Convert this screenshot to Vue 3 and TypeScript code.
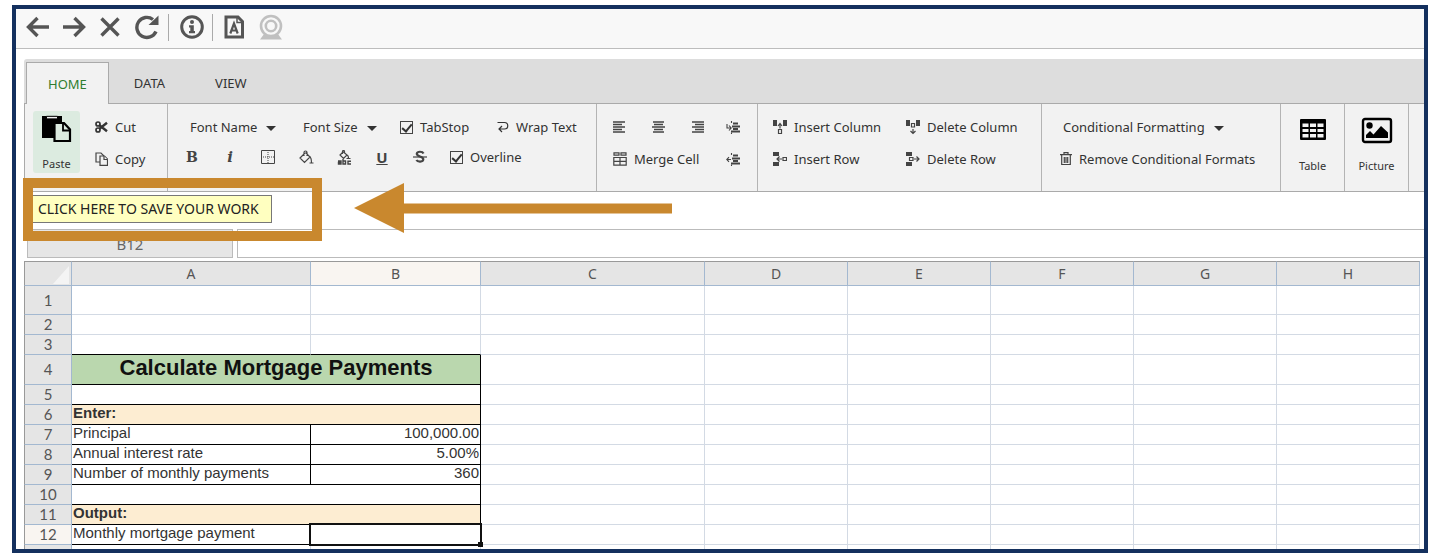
<script setup lang="ts">
import { ref } from 'vue'

interface Row {
  n: number
  tall?: 'first' | 'title'
  kind?: 'title' | 'band' | 'blank' | 'entry' | 'output'
  label?: string
  value?: string
}

const columns = ['A', 'B', 'C', 'D', 'E', 'F', 'G', 'H']
const tabs = ['HOME', 'DATA', 'VIEW']
const activeTab = ref('HOME')
const tabStop = ref(true)
const overline = ref(true)
const cellName = ref('B12')
const formula = ref('')

const rows: Row[] = [
  { n: 1, tall: 'first' },
  { n: 2 },
  { n: 3 },
  { n: 4, tall: 'title', kind: 'title', label: 'Calculate Mortgage Payments' },
  { n: 5, kind: 'blank' },
  { n: 6, kind: 'band', label: 'Enter:' },
  { n: 7, kind: 'entry', label: 'Principal', value: '100,000.00' },
  { n: 8, kind: 'entry', label: 'Annual interest rate', value: '5.00%' },
  { n: 9, kind: 'entry', label: 'Number of monthly payments', value: '360' },
  { n: 10, kind: 'blank' },
  { n: 11, kind: 'band', label: 'Output:' },
  { n: 12, kind: 'output', label: 'Monthly mortgage payment' },
]

const isMerged = (r: Row) => r.kind === 'title' || r.kind === 'band' || r.kind === 'blank'
</script>

<template>
  <div class="frame">
    <nav class="browser" aria-label="Browser">
      <button aria-label="Back"><svg width="24" height="24" viewBox="0 0 24 24" class="thick"><path d="M23 12H3M11.500 3L2.500 12l9 9" /></svg></button>
      <button aria-label="Forward"><svg width="24" height="24" viewBox="0 0 24 24" class="thick"><path d="M1 12h20M12.500 3l9 9-9 9" /></svg></button>
      <button aria-label="Stop"><svg width="24" height="24" viewBox="0 0 24 24" class="thick"><path d="M3.500 3.500l17 17M20.500 3.500l-17 17" /></svg></button>
      <button aria-label="Reload"><svg width="26" height="26" viewBox="0 0 26 26" class="thick"><path d="M22 17.500A10 10 0 1 1 19 5.500" /><path d="M24.500 1.500v9.500h-10z" fill="#555" stroke="none" /></svg></button>
      <span class="sep"></span>
      <button aria-label="Information"><svg width="24" height="24" viewBox="0 0 24 24"><circle cx="12" cy="12" r="10.300" fill="none" stroke="#555" stroke-width="3" /><circle cx="12" cy="7" r="2" fill="#555" /><path d="M9 10.200h4.800V16H15v2.200H9V16h1.300v-3.600H9z" fill="#555" /></svg></button>
      <span class="sep"></span>
      <button aria-label="Text document"><svg width="20" height="24" viewBox="0 0 20 24"><path d="M2 2h12l4.500 4.500V22H2z" fill="#f8f8f8" stroke="#555" stroke-width="3" /><path d="M13 1v6.500h6" fill="none" stroke="#555" stroke-width="1.500" /><path d="M6.300 18.500L10 8.500l3.700 10M7.500 15.500h5" fill="none" stroke="#555" stroke-width="2.200" /></svg></button>
      <button class="camera" aria-label="Camera"><svg width="24" height="26" viewBox="0 0 24 26" fill="none" stroke="#c0c0c0"><path d="M6 20l-3.500 4.700h19L18 20z" stroke-width="1.500" fill="#c0c0c0" /><circle cx="12" cy="12" r="10" stroke-width="2.600" fill="#f8f8f8" /><circle cx="12" cy="12" r="5.200" stroke-width="2.600" /></svg></button>
    </nav>

    <main class="app">
      <div class="tabs" role="tablist">
        <button v-for="t in tabs" :key="t" role="tab" :aria-selected="t === activeTab" :class="{ active: t === activeTab }" @click="activeTab = t">{{ t }}</button>
      </div>

      <div class="ribbon">
        <section class="group clipboard">
          <button class="big paste">
            <svg width="30" height="28" viewBox="0 0 30 28"><path d="M0 1h20v8h-8v14H0z" /><path d="M4.500 1.300h11v2.600h-11z" fill="#f2f2f2" stroke="#000" /><path d="M12.500 8h9.500l6 6.500V26H12.500z" fill="#dcebe0" stroke="#000" stroke-width="2.200" /><path d="M21 8v7.500h7" fill="none" stroke="#000" stroke-width="1.800" /></svg>
            <span>Paste</span>
          </button>
          <div class="stack">
            <button class="tool"><svg width="13" height="14" viewBox="0 0 13 14" fill="none" stroke="#333" stroke-width="1.700"><circle cx="3" cy="4" r="2" /><circle cx="3" cy="10" r="2" /><path d="M4.500 5.300L12 11.300M4.500 8.700L12 2.700" stroke-width="2.400" /></svg>Cut</button>
            <button class="tool"><svg width="13" height="14" viewBox="0 0 13 14" fill="#f2f2f2" stroke="#444" stroke-width="1.200"><path d="M1 1h5l2.500 2.500V10H1z" /><path d="M5 4h4.500l3 3v6.300H5z" /><path d="M9 4v3.500h3.500" /></svg>Copy</button>
          </div>
        </section>

        <section class="group font">
          <div class="line selects">
            <button>Font Name<i class="caret"></i></button>
            <button>Font Size<i class="caret"></i></button>
            <label><input v-model="tabStop" type="checkbox" />TabStop</label>
            <button class="tool"><svg width="12" height="12" viewBox="0 0 12 12" fill="none" stroke="#333" stroke-width="1.200"><path d="M.500 1.500H7.500a3 3 0 0 1 0 6.500H2M5 5L2 8l3 3" /></svg>Wrap Text</button>
          </div>
          <div class="line styles">
            <button class="icon glyph" aria-label="Bold"><b>B</b></button>
            <button class="icon glyph" aria-label="Italic"><em>i</em></button>
            <button class="icon" aria-label="Borders"><svg width="14" height="14" viewBox="0 0 14 14" fill="none" stroke="#444"><path d="M.5.5h13v13H.5z" /><path d="M7 2v11M2 7h11" stroke-dasharray="1 1" /></svg></button>
            <button class="icon" aria-label="Fill colour"><svg width="15" height="14" viewBox="0 0 15 14" fill="none" stroke="#444" stroke-width="1.200"><path d="M6 3L1 8l4.500 4.500 5.500-5.500-4.500-4.500M5 6V2.500a1.500 1.500 0 0 1 3 0V6" /><path d="M10.500 6.500c2 1 2 3 2 6.500M10.500 13h4" /></svg></button>
            <button class="icon" aria-label="Font colour"><svg width="15" height="15" viewBox="0 0 15 15" fill="none" stroke="#444"><path d="M6.500 1.500L3 5l3.500 3.500L10 5 6.500 2M5.500 4V1.500a1 1 0 0 1 2 0V4M10 5c1.500.5 1.500 2 1.500 3.500M9.500 8.500h4" stroke-width="1.200" /><path d="M1 11h3v3H1.500v-1.500H4M6 9v5h2.500v-3H6M14 11.200h-3V14h3" stroke-width="1.400" /></svg></button>
            <button class="icon glyph" aria-label="Underline"><u>U</u></button>
            <button class="icon" aria-label="Strikethrough"><svg width="14" height="14" viewBox="0 0 14 14" fill="none" stroke="#444"><path d="M10.500 3.500C9.500 1.200 4.300 1 3.800 3.700c-.2 3 6.700 2.500 6.500 5.600-.2 3-5.600 2.900-6.900.7" stroke-width="2.200" /><path d="M0 7h14" stroke-width="1.200" /></svg></button>
            <label><input v-model="overline" type="checkbox" />Overline</label>
          </div>
        </section>

        <section class="group align">
          <div class="line">
            <button class="icon" aria-label="Align left"><svg width="13" height="12" viewBox="0 0 13 12" class="bars"><path d="M0 1h12M0 3.500h9M0 6h12M0 8.500h9M0 11h12" /></svg></button>
            <button class="icon" aria-label="Align centre"><svg width="13" height="12" viewBox="0 0 13 12" class="bars"><path d="M1 1h11M2 3.500h9M0 6h13M2 8.500h9M1 11h11" /></svg></button>
            <button class="icon" aria-label="Align right"><svg width="13" height="12" viewBox="0 0 13 12" class="bars"><path d="M1 1h12M4 3.500h9M1 6h12M4 8.500h9M1 11h12" /></svg></button>
            <button class="icon" aria-label="Increase indent"><svg width="15" height="13" viewBox="0 0 15 13" class="bars"><path d="M7 2.500h5M6 5.500h8M7 8h5M5 10.500h9" stroke-width="1.800" /><path d="M5.500 0v2M5.500 11.500V13M1 3v4h4M3 4.500L5.200 7 3 9.500" stroke-width="1.100" /></svg></button>
          </div>
          <div class="line">
            <button class="tool merge"><svg width="14" height="14" viewBox="0 0 14 14" fill="none" stroke="#444" stroke-width="1.200"><path d="M1 .8h5v2.400H1zM8 .8h5v2.400H8zM.8 5.500h12.400v7.700H.8zM.8 9.300h12.400M7 5.500v7.700" /></svg>Merge Cell</button>
            <button class="icon" aria-label="Decrease indent"><svg width="15" height="13" viewBox="0 0 15 13" class="bars"><path d="M7 2.500h5M6 5.500h8M7 8h5M5 10.500h9" stroke-width="1.800" /><path d="M5.500 0v2M5.500 11.500V13M5 6.500H.800M3 4.200L.800 6.500 3 8.800" stroke-width="1.100" /></svg></button>
          </div>
        </section>

        <section class="group cells">
          <button class="tool"><svg width="14" height="16" viewBox="0 0 14 16" fill="#444"><path d="M0 1h4v6H0zM10 1h4v6h-4z" /><path d="M5.500 10.500h3v4h-3zM7 9.500V5M5 7l2-2.500L9 7" fill="none" stroke="#444" stroke-width="1.200" /></svg>Insert Column</button>
          <button class="tool"><svg width="14" height="16" viewBox="0 0 14 16" fill="#444"><path d="M0 1h4v6H0zM10 1h4v6h-4z" /><path d="M5.500 4.500h3V8h-3zM7 10v4.500M4.500 12L7 14.500 9.500 12" fill="none" stroke="#444" stroke-width="1.200" /></svg>Delete Column</button>
          <button class="tool"><svg width="14" height="14" viewBox="0 0 14 14" fill="#444"><path d="M0 0h6v4H0zM0 10h6v4H0z" /><path d="M10 5.500h3.500v3H10zM9 7H4M6.500 4.500L4 7l2.500 2.500" fill="none" stroke="#444" stroke-width="1.200" /></svg>Insert Row</button>
          <button class="tool"><svg width="14" height="14" viewBox="0 0 14 14" fill="#444"><path d="M0 0h6v4H0zM0 10h6v4H0z" /><path d="M3.500 5.500H7v3H3.500zM8 7h5M10.500 4.500L13 7l-2.500 2.500" fill="none" stroke="#444" stroke-width="1.200" /></svg>Delete Row</button>
        </section>

        <section class="group conditional">
          <button class="text">Conditional Formatting<i class="caret"></i></button>
          <button class="tool"><svg width="12" height="14" viewBox="0 0 12 14" fill="none" stroke="#444" stroke-width="1.200"><path d="M0 2.700h12M4 2.500V.7h4v1.800M1.700 3v9.500h8.600V3M4.300 5v6M6 5v6M7.700 5v6" /></svg>Remove Conditional Formats</button>
        </section>

        <section class="group single">
          <button class="big"><svg width="28" height="28" viewBox="0 0 28 28"><path d="M2 3h24v19H2z" fill="#000" stroke="#000" stroke-width="2" stroke-linejoin="round" /><path d="M3.500 6.500h6V10h-6zM11 6.500h6V10h-6zM18.500 6.500h6V10h-6zM3.500 12h6v3h-6zM11 12h6v3h-6zM18.500 12h6v3h-6zM3.500 17h6v3.500h-6zM11 17h6v3.500h-6zM18.500 17h6v3.500h-6z" fill="#f2f2f2" /></svg><span>Table</span></button>
        </section>
        <section class="group single">
          <button class="big"><svg width="32" height="28" viewBox="0 0 32 28"><rect x="2" y="2" width="28" height="23" rx="2" fill="none" stroke="#000" stroke-width="2.400" /><circle cx="8.500" cy="8.500" r="3.200" /><path d="M5 21v-3l4-4 3.500 3.500L20 9l7 6.500V21z" /></svg><span>Picture</span></button>
        </section>
      </div>

      <div class="saveRow">
        <button class="save">CLICK HERE TO SAVE YOUR WORK</button>
        <div class="highlight"></div>
        <svg class="arrow" width="318" height="50" viewBox="0 0 318 50"><path d="M0 25L50 0v20.500h268v10H50V50z" fill="#c9882e" /></svg>
      </div>

      <div class="formulaBar">
        <input v-model="cellName" class="nameBox" aria-label="Cell name" />
        <input v-model="formula" class="formula" aria-label="Formula" />
      </div>

      <table class="sheet">
        <colgroup>
          <col class="cHead" /><col class="cA" /><col class="cB" /><col class="cC" />
          <col v-for="c in columns.slice(3)" :key="c" class="cRest" />
        </colgroup>
        <thead>
          <tr>
            <th class="corner"><svg width="16" height="18" viewBox="0 0 16 18"><path d="M16 0v18H0z" fill="#f4f4f4" /></svg></th>
            <th v-for="c in columns" :key="c" scope="col" :class="{ current: c === 'B' }">{{ c }}</th>
          </tr>
        </thead>
        <tbody>
          <tr v-for="r in rows" :key="r.n" :class="[r.kind, r.tall, { above: r.n === 3 }]">
            <th scope="row" :class="{ current: r.n === 12 }">{{ r.n }}</th>
            <td v-if="isMerged(r)" colspan="2" class="merged">{{ r.label }}</td>
            <template v-else>
              <td class="a">{{ r.label }}</td>
              <td class="b">{{ r.value }}<span v-if="r.kind === 'output'" class="selection"></span></td>
            </template>
            <td v-for="c in columns.slice(2)" :key="c"></td>
          </tr>
          <tr>
            <th></th>
            <td v-for="c in columns" :key="c"></td>
          </tr>
        </tbody>
      </table>
    </main>
  </div>
</template>

<style>
body { margin: 0; background: #fff; overflow: hidden; }
</style>

<style scoped>
* { box-sizing: border-box; }
.frame {
  position: relative;
  height: calc(100vh - 8px);
  margin: 5px 10px 3px 12px;
  border: 4px solid #14305e;
  background: #fff;
  overflow: hidden;
  font: 13px/18px "Noto Sans", "Open Sans", sans-serif;
  color: #333;
}
button {
  font: inherit;
  color: inherit;
  background: none;
  border: 0;
  padding: 0;
  margin: 0;
  white-space: nowrap;
}
svg { display: block; flex: none; }
.browser {
  display: flex;
  align-items: center;
  gap: 12px;
  height: 40px;
  padding: 0 10px 3px;
  background: #f8f8f8;
  border-bottom: 1px solid #bdbdbd;
}
.browser .sep { width: 1px; height: 27px; background: #aaa; margin: 0 -4px; }
.browser .sep + button { margin-left: 3px; }
.browser .camera { margin-left: 3px; }
.thick { fill: none; stroke: #555; stroke-width: 3.4; }
.app { margin: 10px 0 0 8px; }

.tabs {
  display: flex;
  height: 44px;
  padding: 3px 0 0 2px;
  background: #ddd;
  border-radius: 3px 0 0 0;
}
.tabs button { height: 42px; padding: 0 25px; position: relative; }
.tabs .active {
  padding: 0 21px;
  color: #2f7d2f;
  background: #f2f2f2;
  border: 1px solid #aaa;
  border-bottom: 0;
}

.ribbon {
  display: flex;
  height: 89px;
  background: #f2f2f2;
  border: 1px solid #aaa;
  border-right: 0;
}
.group { flex: none; border-right: 1px solid #b4b4b4; padding-top: 7px; }
.line { display: flex; align-items: center; height: 32px; }
.tool { display: flex; align-items: center; gap: 7px; height: 32px; }
.icon { display: flex; align-items: center; justify-content: center; }
label { display: flex; align-items: center; gap: 7px; }
.caret {
  display: inline-block;
  margin-left: 9px;
  vertical-align: middle;
  border: 5px solid transparent;
  border-top-color: #333;
  border-bottom: 0;
}
.clipboard { display: flex; width: 143px; gap: 15px; padding-left: 8px; }
.big {
  display: flex;
  flex-direction: column;
  align-items: center;
  justify-content: space-between;
  width: 100%;
  height: 62px;
  padding-top: 4px;
  font-size: 11px;
}
.paste { width: 47px; background: #dcebe0; border-radius: 3px; }
.font { width: 429px; padding-top: 8px; }
.selects { height: 30px; padding-left: 22px; }
.selects > :nth-child(1) { width: 113px; text-align: left; }
.selects > :nth-child(2) { width: 97px; text-align: left; }
.selects > :nth-child(3) { width: 97px; }
.styles { height: 30px; padding-left: 5px; }
.styles .icon { width: 38px; }
.styles label { padding-left: 11px; }
.glyph { font: bold 15px/18px "DejaVu Serif", serif; color: #444; }
.glyph b { font-size: 14px; }
.glyph u { font: bold 15px/18px "Noto Sans", sans-serif; }
input[type="checkbox"] {
  appearance: none;
  display: grid;
  place-items: center;
  width: 13px;
  height: 13px;
  margin: 0;
  border: 1px solid #444;
}
input[type="checkbox"]:checked::after {
  content: "";
  width: 4px;
  height: 8px;
  margin-bottom: 2px;
  border: solid #333;
  border-width: 0 2px 2px 0;
  transform: rotate(40deg);
}
.align { width: 161px; padding-left: 3px; }
.align .icon { width: 39px; }
.align .icon:last-child { width: 32px; }
.align .merge { width: 117px; padding-left: 13px; }
.bars { fill: none; stroke: #444; stroke-width: 1.3; }
.cells {
  display: grid;
  grid-template-columns: 133px auto;
  align-content: start;
  width: 284px;
  padding-left: 15px;
}
.conditional { width: 239px; padding-left: 18px; }
.conditional .text { display: block; height: 32px; padding-left: 3px; }
.single { width: 64px; padding-top: 9px; }

.saveRow { position: relative; height: 37px; padding: 3px 0 0 7px; }
.save {
  display: block;
  height: 28px;
  padding: 0 12px 0 6px;
  background: #ffffc0;
  border: 1px solid #777;
  font-size: 14px;
  color: #222;
}
.highlight {
  position: absolute;
  z-index: 2;
  left: -1px;
  top: -14px;
  width: 299px;
  height: 63px;
  border: 10px solid #c9882e;
}
.arrow { position: absolute; z-index: 2; left: 330px; top: -9px; }

.formulaBar { display: flex; gap: 4px; height: 29px; padding-left: 3px; }
.formulaBar input {
  min-width: 0;
  margin: 0;
  padding: 0 4px;
  border: 1px solid #bbb;
  outline: 0;
  font: 15px/18px "Noto Sans", sans-serif;
  color: #666;
}
.formulaBar .nameBox { width: 206px; background: #e6e6e6; text-align: center; }
.formulaBar .formula { flex: 1; border-right: 0; }

.sheet {
  table-layout: fixed;
  width: 1396px;
  margin-top: 3px;
  border-collapse: separate;
  border-spacing: 0;
  font: 15px/16px "Liberation Sans", Arial, sans-serif;
}
.cHead { width: 48px; }
.cA { width: 239px; }
.cB { width: 170px; }
.cC { width: 224px; }
.cRest { width: 143px; }
.sheet th {
  padding: 0 0 1px;
  background: #e5e5e5;
  border-right: 1px solid #a3b8d0;
  border-bottom: 1px solid #a3b8d0;
  font: 15px/16px Lato, sans-serif;
  color: #555;
}
.sheet th.current { background: #f9f5f1; }
.sheet thead th {
  height: 25px;
  padding: 0;
  border-top: 1px solid #999;
  font: 14px/16px "Noto Sans", sans-serif;
}
.sheet tr > th:first-child { border-left: 1px solid #999; }
.sheet .corner svg { margin: 2px 2px 0 auto; }
.sheet td {
  padding: 0 1px 3px;
  border-right: 1px solid #d3dae4;
  border-bottom: 1px solid #d3dae4;
  white-space: nowrap;
}
.sheet tbody tr { height: 20px; }
.sheet tbody tr.first { height: 29px; }
.sheet tbody tr.title { height: 30px; }
.above td:nth-child(-n + 3),
.merged,
.entry .a,
.entry .b,
.output .a,
.output .b { border-bottom-color: #000 !important; }
.merged,
.entry .a,
.entry .b { border-right-color: #000 !important; }
.title .merged {
  background: #bad7ae;
  text-align: center;
  font: bold 22px/24px "Liberation Sans", Arial, sans-serif;
  color: #111;
}
.band .merged { background: #fdedd2; font-weight: bold; }
.b { position: relative; text-align: right; }
.selection {
  position: absolute;
  z-index: 1;
  inset: -2px;
  border: 2px solid #111;
}
.selection::after {
  content: "";
  position: absolute;
  right: -3px;
  bottom: -3px;
  width: 5px;
  height: 5px;
  background: #111;
}
</style>
